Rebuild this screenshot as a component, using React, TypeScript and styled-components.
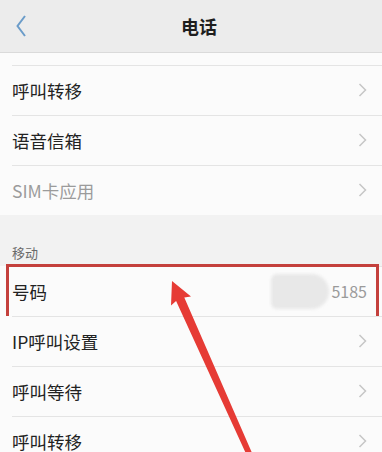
import React from "react";
import styled, { createGlobalStyle } from "styled-components";

const Global = createGlobalStyle`
  html, body { margin: 0; padding: 0; background: #fafafa; overflow: hidden; }
  body { font-family: "Noto Sans CJK SC", "Noto Sans", sans-serif; }
`;

const Page = styled.div`
  position: relative;
  width: 382px;
  height: 452px;
  overflow: hidden;
  background: #fafafa;
`;

const Header = styled.header`
  height: 52px;
  background: #ececec;
  border-bottom: 1px solid #dadada;
  display: grid;
  grid-template-columns: 1fr auto 1fr;
  align-items: center;
  padding: 0 0 0 16px;
`;

const Back = styled.div`
  display: flex;
  align-items: center;
`;

const Title = styled.h1`
  margin: 0;
  font-size: 18px;
  font-weight: 700;
  color: #1e1e1e;
`;

const PartialRow = styled.div`
  height: 12px;
  background: #fbfbfb;
`;

const Row = styled.div<{ $muted?: boolean }>`
  position: relative;
  height: 50px;
  background: #fbfbfb;
  display: flex;
  align-items: center;
  justify-content: space-between;
  padding: 0 15px 0 12px;
  font-size: 17.5px;
  color: ${(p) => (p.$muted ? "#9b9b9b" : "#222")};
  &::before {
    content: "";
    position: absolute;
    top: 0;
    left: 12px;
    right: 0;
    height: 1px;
    background: #e4e4e4;
  }
`;

const Section = styled.div`
  height: 51px;
  background: #f2f2f2;
  display: flex;
  align-items: flex-end;
  padding: 0 0 4px 12px;
  box-sizing: border-box;
  font-size: 13px;
  color: #6a6a6a;
`;

const Value = styled.div`
  display: flex;
  align-items: center;
  font-size: 16px;
  color: #9a9a9a;
`;

const Blur = styled.span`
  display: inline-block;
  width: 58px;
  height: 35px;
  margin-right: 2px;
  background: #e8e8e8;
  border-radius: 6px 18px 18px 6px;
  filter: blur(1.5px);
`;

const Highlight = styled.div`
  position: absolute;
  top: -2px;
  bottom: -3px;
  left: 6px;
  right: 3px;
  border: 3px solid #c4403c;
  pointer-events: none;
`;

const Overlay = styled.svg`
  position: absolute;
  left: 0;
  top: 0;
  pointer-events: none;
`;

const Chevron = () => (
  <svg width="9" height="14" viewBox="0 0 9 14">
    <polyline points="1.5,1 7.5,7 1.5,13" fill="none" stroke="#c6c6c6" strokeWidth="1.5" />
  </svg>
);

const items1 = [
  { label: "呼叫转移" },
  { label: "语音信箱" },
  { label: "SIM卡应用", muted: true },
];

const items2 = ["IP呼叫设置", "呼叫等待", "呼叫转移"];

export default function App() {
  return (
    <Page>
      <Global />
      <Header>
        <Back>
          <svg width="12" height="24" viewBox="0 0 12 24">
            <polyline points="9,2 1.5,12 9,22" fill="none" stroke="#6b9cc9" strokeWidth="2" />
          </svg>
        </Back>
        <Title>电话</Title>
        <span />
      </Header>
      <PartialRow />
      {items1.map((it) => (
        <Row key={it.label} $muted={it.muted}>
          <span>{it.label}</span>
          <Chevron />
        </Row>
      ))}
      <Section>移动</Section>
      <Row>
        <span>号码</span>
        <Value>
          <Blur />
          5185
        </Value>
        <Highlight />
      </Row>
      {items2.map((l) => (
        <Row key={l}>
          <span>{l}</span>
          <Chevron />
        </Row>
      ))}
      <Overlay width="382" height="452" viewBox="0 0 382 452">
        <polygon
          points="172,281 191,296.6 184.3,297.5 254.6,458.9 249.4,461.1 176.1,301.1 171,305.6"
          fill="#e63b35"
        />
      </Overlay>
    </Page>
  );
}
